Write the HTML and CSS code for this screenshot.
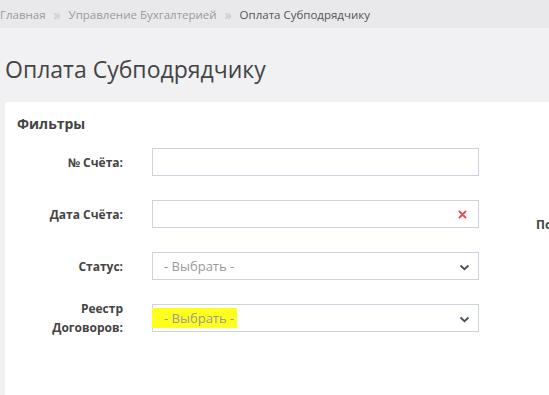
FILE: index.html
```html
<!DOCTYPE html>
<html lang="ru">
<head>
<meta charset="UTF-8">
<meta name="viewport" content="width=device-width, initial-scale=1.0">
<title>Оплата Субподрядчику</title>
<link rel="stylesheet" href="styles.css">
</head>
<body>

<div class="breadcrumbs">
    <a href="#">Главная</a>
    <span class="sep">»</span>
    <a href="#">Управление Бухгалтерией</a>
    <span class="sep">»</span>
    <span class="current">Оплата Субподрядчику</span>
</div>

<h1 class="page-title">Оплата Субподрядчику</h1>

<div class="card">
    <h3>Фильтры</h3>

    <div class="filters">
        <label class="lbl">№ Счёта:</label>
        <div class="field"></div>
        <div></div>

        <label class="lbl">Дата Счёта:</label>
        <div class="field">
            <svg class="clear" width="9" height="9" viewBox="0 0 9 9">
                <path d="M1.5 1.5 L7.5 7.5 M7.5 1.5 L1.5 7.5" stroke="#ec4b5a" stroke-width="2" stroke-linecap="round"/>
            </svg>
        </div>
        <label class="lbl side">Поставщик:</label>

        <label class="lbl">Статус:</label>
        <div class="field select">
            <span class="placeholder">- Выбрать -</span>
            <svg class="chevron" width="11" height="7" viewBox="0 0 11 7">
                <path d="M1.5 1.5 L5.5 5.2 L9.5 1.5" fill="none" stroke="#4a4f57" stroke-width="1.8"/>
            </svg>
        </div>
        <div></div>

        <label class="lbl">Реестр<br>Договоров:</label>
        <div class="field select">
            <span class="placeholder mark">- Выбрать -</span>
            <svg class="chevron" width="11" height="7" viewBox="0 0 11 7">
                <path d="M1.5 1.5 L5.5 5.2 L9.5 1.5" fill="none" stroke="#4a4f57" stroke-width="1.8"/>
            </svg>
        </div>
        <div></div>
    </div>
</div>

</body>
</html>
```

FILE: styles.css
```css
body {
    font-family: 'Open Sans', 'Noto Sans', sans-serif;
    background-color: #f1f1f4;
    margin: 0;
    padding: 0;
    overflow: hidden;
    color: #444;
}
.breadcrumbs {
    height: 28px;
    display: flex;
    align-items: center;
    gap: 6px;
    padding-left: 0;
    background-color: #e9e9eb;
    font-size: 11.5px;
    white-space: nowrap;
}
.breadcrumbs a {
    color: #9a9a9a;
    text-decoration: none;
}
.breadcrumbs .sep {
    color: #c4c4c4;
    font-size: 14px;
    margin: 0 2px;
}
.breadcrumbs .current {
    color: #555;
}
.page-title {
    margin: 0;
    padding: 26px 0 0 5px;
    height: 48px;
    font-size: 23px;
    font-weight: 400;
    line-height: 30px;
    color: #444;
}
.card {
    margin-left: 5px;
    width: 620px;
    height: 320px;
    background-color: #fff;
    border-radius: 3px;
    padding: 12px 12px;
    box-sizing: border-box;
}
.card h3 {
    margin: 0;
    font-size: 14px;
    font-weight: 700;
    line-height: 20px;
    color: #444;
}
.filters {
    display: grid;
    grid-template-columns: 106px 327px 80px;
    grid-auto-rows: 28px;
    column-gap: 29px;
    row-gap: 24px;
    margin-top: 14px;
}
.lbl {
    font-size: 12px;
    font-weight: 700;
    text-align: right;
    align-self: center;
    line-height: 19px;
    color: #444;
}
.lbl.side {
    text-align: left;
    margin-left: 28px;
    padding-top: 20px;
    white-space: nowrap;
}
.field {
    height: 28px;
    border: 1px solid #cdd3e1;
    box-sizing: border-box;
    display: flex;
    align-items: center;
    position: relative;
}
.field .clear {
    position: absolute;
    right: 11px;
    top: 9px;
}
.field .chevron {
    position: absolute;
    right: 8px;
    top: 11px;
}
.placeholder {
    font-size: 13px;
    color: #999;
    padding-left: 11px;
}
.mark {
    background-color: #ffff1e;
    margin-left: -1px;
    padding-left: 12px;
    padding-right: 3px;
    line-height: 20px;
}
```
